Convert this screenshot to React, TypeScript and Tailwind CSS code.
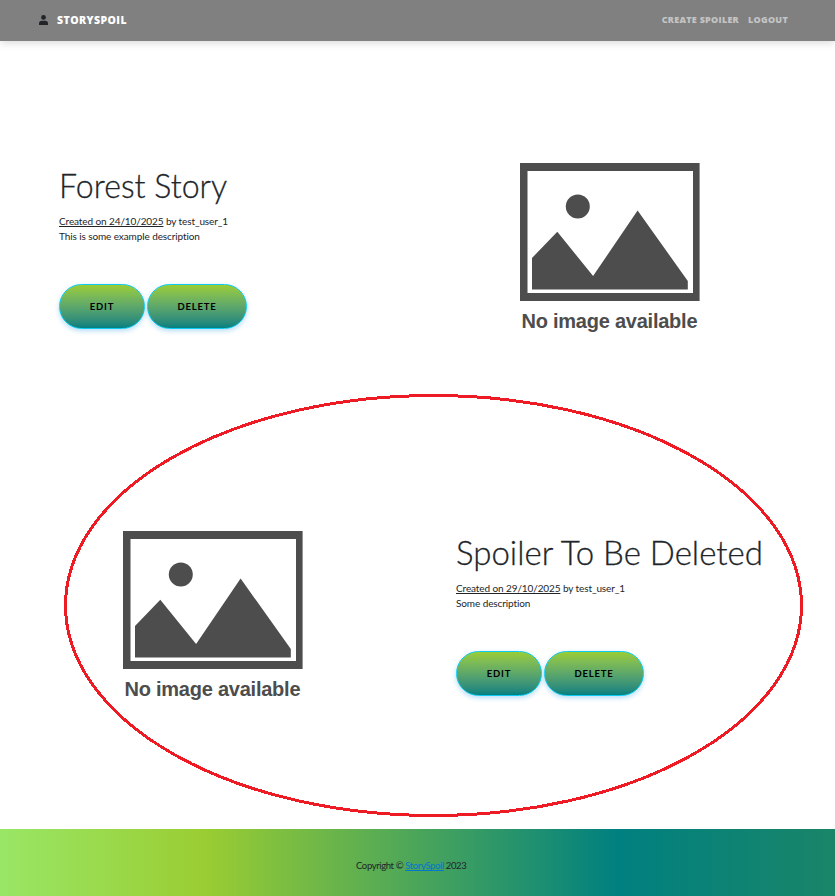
function Placeholder() {
  return (
    <svg width="180" height="172" viewBox="0 0 180 172" role="img" aria-label="No image available">
      <path fill="#4d4d4d" fillRule="evenodd" d="M0 0H179.6V138H0ZM7.5 8V130H173V8Z" />
      <circle cx="57.8" cy="43.6" r="12" fill="#4d4d4d" />
      <path fill="#4d4d4d" d="M12 95L37.3 68.8L73.1 113L117.6 47.5L167.8 118V126.5H12Z" />
      <text
        x="1.5"
        y="165.3"
        textLength="176"
        fill="#4d4d4d"
        className="font-['Liberation_Sans',sans-serif] text-[20px] font-bold"
      >
        No image available
      </text>
    </svg>
  );
}

function PillButton({ label, width }: { label: string; width: string }) {
  return (
    <button
      className={`${width} h-[45px] rounded-full border border-[#0dcaf0] bg-linear-to-b from-[#9acd32] to-[#008080] pt-[2px] text-[9.5px] font-bold tracking-[0.8px] text-black shadow-[0_2px_5px_rgba(13,140,220,0.3)]`}
    >
      {label}
    </button>
  );
}

type StoryProps = { title: string; date: string; description: string; titleWidth: number };

function Story({ title, date, description, titleWidth }: StoryProps) {
  return (
    <div className="flex flex-col pl-[45px] pt-[3px]">
      <h2>
        <svg width={titleWidth + 4} height="48" className="block overflow-visible" aria-label={title}>
          <text
            x="0"
            y="32.5"
            textLength={titleWidth}
            lengthAdjust="spacingAndGlyphs"
            fill="#212529"
            stroke="#212529"
            strokeWidth="0.3"
            className="font-['Lato',sans-serif] text-[33.5px] font-light"
          >
            {title}
          </text>
        </svg>
      </h2>
      <p className="mt-[1px] text-[10px] leading-[15px] tracking-[-0.1px] text-[#212529]">
        <u>Created on {date}</u> by test_user_1
        <br />
        {description}
      </p>
      <div className="mt-[40px] flex gap-[2px]">
        <PillButton label="EDIT" width="w-[86px]" />
        <PillButton label="DELETE" width="w-[100px]" />
      </div>
    </div>
  );
}

export default function App() {
  return (
    <div className="relative flex h-[896px] w-[835px] flex-col overflow-hidden bg-white font-['Lato',sans-serif]">
      <nav className="flex h-[41px] shrink-0 items-center justify-between bg-[#808080] pl-[39px] pr-[47px] font-['Open_Sans',sans-serif] shadow-[0_2px_8px_rgba(0,0,0,0.15)]">
        <div className="flex items-center gap-[9px]">
          <svg width="9" height="10" viewBox="0 0 9 10" fill="#212529" className="-mt-[1px]">
            <circle cx="4.5" cy="2.4" r="2.4" />
            <path d="M0 10V8.4Q0 5.7 3 5.7H6Q9 5.7 9 8.4V10Z" />
          </svg>
          <span className="text-[10.5px] font-extrabold tracking-[0.45px] text-white">STORYSPOIL</span>
        </div>
        <div className="flex gap-[9px] pb-[2px] text-[9px] font-extrabold tracking-[0.27px] text-[#c4c4c4]">
          <span>CREATE SPOILER</span>
          <span>LOGOUT</span>
        </div>
      </nav>

      <main className="flex h-[788px] shrink-0 flex-col pl-[14px] pt-[21px]">
        <section className="grid h-[367px] grid-cols-[397px_397px] items-center">
          <Story title="Forest Story" date="24/10/2025" description="This is some example description" titleWidth={168} />
          <div className="flex justify-center pt-[7px]">
            <Placeholder />
          </div>
        </section>
        <section className="grid h-[367px] grid-cols-[397px_397px] items-center">
          <div className="flex justify-center pt-[8px]">
            <Placeholder />
          </div>
          <Story title="Spoiler To Be Deleted" date="29/10/2025" description="Some description" titleWidth={307} />
        </section>
      </main>

      <footer className="flex flex-1 items-center bg-[linear-gradient(to_right,#99e666_0%,#9acd32_24.5%,#008080_74%,#1a8568_100%)] pl-[356px] pt-[8px] text-[9.5px] text-[#212529]">
        <p className="tracking-[-0.38px]">
          Copyright © <a className="text-[#0077cc] underline">StorySpoil</a> 2023
        </p>
      </footer>

      <svg className="pointer-events-none absolute inset-0" width="835" height="896" fill="none">
        <ellipse cx="433.5" cy="605.5" rx="368" ry="210" stroke="#ed1c24" strokeWidth="3" shapeRendering="crispEdges" />
      </svg>
    </div>
  );
}
